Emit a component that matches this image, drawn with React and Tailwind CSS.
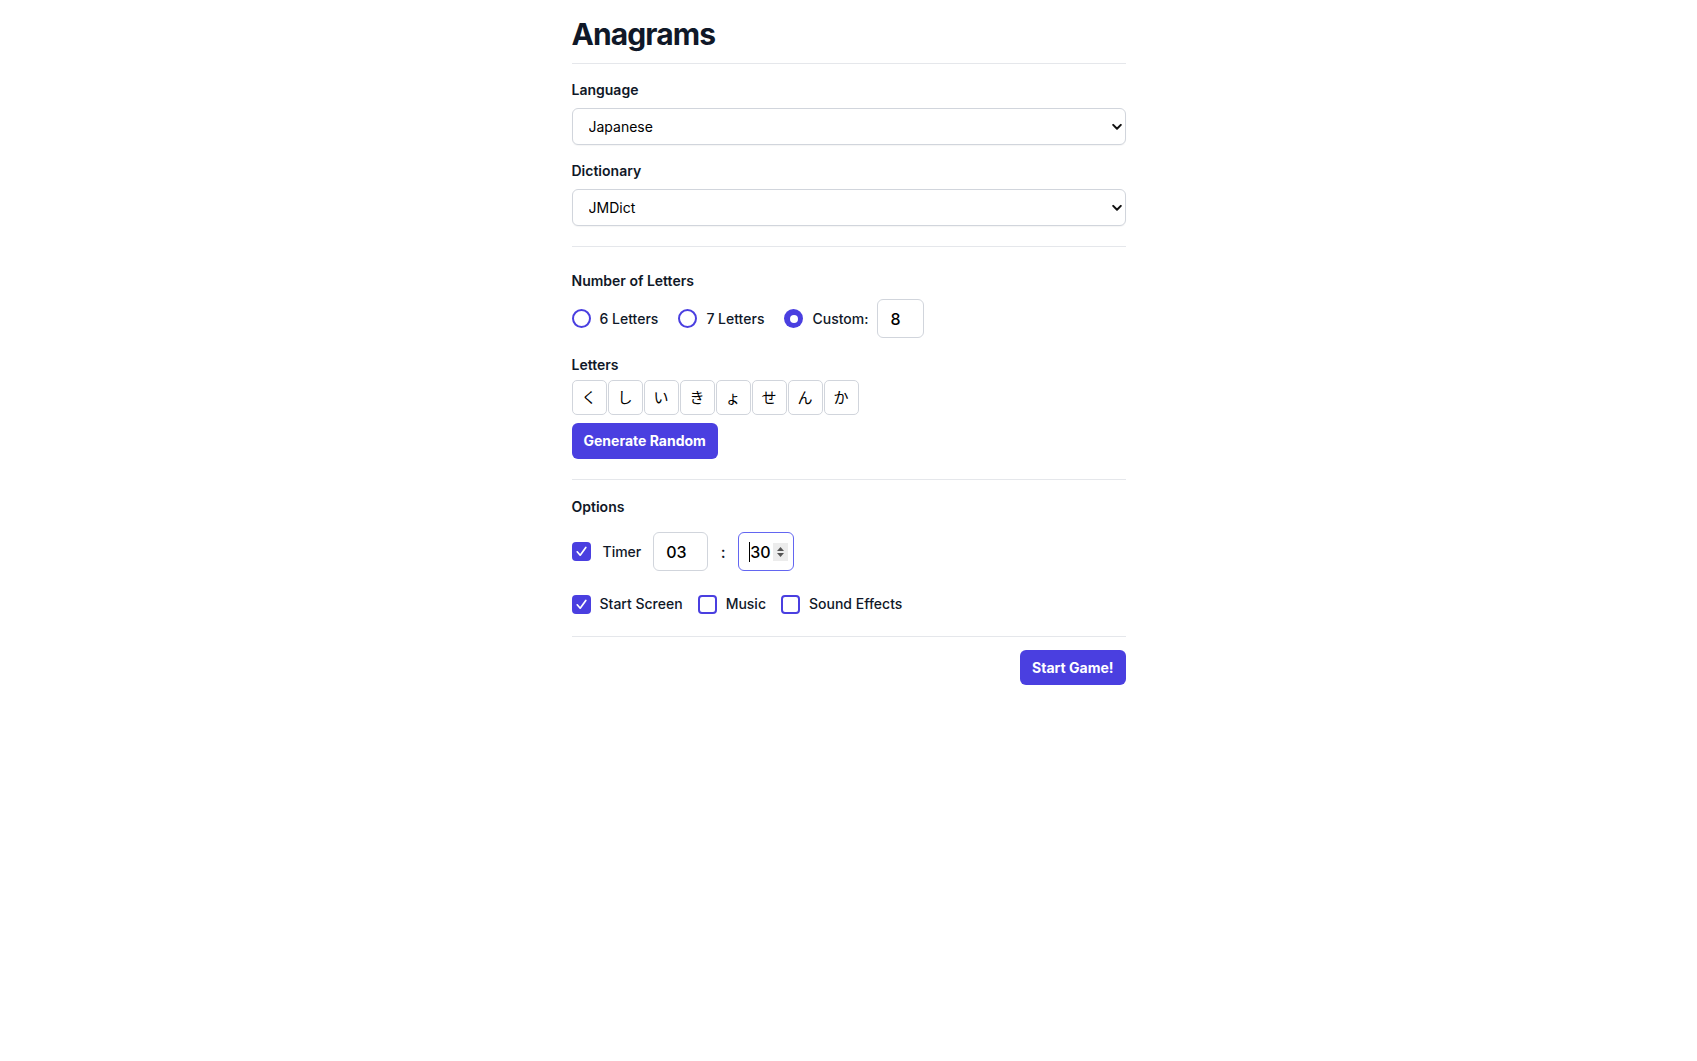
import React, { useState } from "react";

const letters = ["く", "し", "い", "き", "ょ", "せ", "ん", "か"];

// Native-looking select with a small chevron on the right
const SelectBox = ({ value, options }) => (
  <div className="relative">
    <select
      defaultValue={value}
      className="w-full h-[37px] appearance-none rounded-md border border-gray-300 bg-white pl-4 pr-8 text-sm text-black shadow-[0_1px_1px_rgba(0,0,0,0.04)] outline-none"
    >
      {options.map((o) => (
        <option key={o}>{o}</option>
      ))}
    </select>
    <svg
      className="pointer-events-none absolute right-[4px] top-1/2 -translate-y-1/2"
      width="10"
      height="7"
      viewBox="0 0 10 7"
    >
      <path d="M1.2 1.4 L5 5.2 L8.8 1.4" fill="none" stroke="#111" strokeWidth="2" strokeLinecap="round" strokeLinejoin="round" />
    </svg>
  </div>
);

const Radio = ({ checked }) =>
  checked ? (
    <span className="flex h-[19px] w-[19px] items-center justify-center rounded-full bg-[#4a3fe0]">
      <span className="h-[8px] w-[8px] rounded-full bg-white" />
    </span>
  ) : (
    <span className="h-[19px] w-[19px] rounded-full border-2 border-[#4a3fe0] bg-white" />
  );

const Checkbox = ({ checked }) =>
  checked ? (
    <span className="flex h-[19px] w-[19px] items-center justify-center rounded-[4px] bg-[#4a3fe0]">
      <svg width="13" height="13" viewBox="0 0 13 13">
        <path d="M2.2 6.8 L5.2 10.2 L10.8 2.4" fill="none" stroke="white" strokeWidth="1.7" strokeLinecap="round" strokeLinejoin="round" />
      </svg>
    </span>
  ) : (
    <span className="h-[19px] w-[19px] rounded-[4px] border-2 border-[#4a3fe0] bg-white" />
  );

const App = () => {
  const [count, setCount] = useState("custom");
  const [opts, setOpts] = useState({ timer: true, start: true, music: false, sfx: false });

  const toggle = (k) => setOpts({ ...opts, [k]: !opts[k] });

  return (
    <div className="min-h-screen bg-white font-['Inter','Noto_Sans_CJK_JP',sans-serif] text-gray-900">
      <div className="mx-auto w-[554px] pt-4">
        <h1 className="border-b border-gray-200 pb-[11px] text-3xl font-bold tracking-[-0.03em] text-gray-900">
          Anagrams
        </h1>

        {/* Language + dictionary */}
        <div className="border-b border-gray-200 pt-4 pb-5">
          <div className="mb-2 text-sm font-semibold">Language</div>
          <SelectBox value="Japanese" options={["English", "Japanese"]} />
          <div className="mt-4 mb-2 text-sm font-semibold">Dictionary</div>
          <SelectBox value="JMDict" options={["JMDict"]} />
        </div>

        {/* Letters */}
        <div className="border-b border-gray-200 pt-6 pb-5">
          <div className="mb-2 text-sm font-semibold">Number of Letters</div>
          <div className="flex items-center gap-5 text-sm font-medium">
            <label className="flex items-center gap-[9px]" onClick={() => setCount("6")}>
              <Radio checked={count === "6"} />
              <span>6 Letters</span>
            </label>
            <label className="flex items-center gap-[9px]" onClick={() => setCount("7")}>
              <Radio checked={count === "7"} />
              <span>7 Letters</span>
            </label>
            <label className="flex items-center gap-[9px]" onClick={() => setCount("custom")}>
              <Radio checked={count === "custom"} />
              <span>Custom:</span>
              <input
                defaultValue="8"
                className="h-[39px] w-[47px] rounded-md border border-gray-300 px-3 text-base text-black outline-none"
              />
            </label>
          </div>

          <div className="mt-[17px] mb-[5px] text-sm font-semibold">Letters</div>
          <div className="flex gap-px">
            {letters.map((l, i) => (
              <div
                key={i}
                className="flex h-[35px] w-[35px] items-center justify-center rounded-[5px] border border-gray-300 bg-white font-['Noto_Sans_CJK_JP',sans-serif] text-[15px] text-black"
              >
                {l}
              </div>
            ))}
          </div>
          <button className="mt-2 h-9 rounded-md bg-[#4a3fe0] px-3 text-sm font-bold text-white">
            Generate Random
          </button>
        </div>

        {/* Options */}
        <div className="border-b border-gray-200 pt-[17px] pb-[22px]">
          <div className="mb-[15px] text-sm font-semibold">Options</div>
          <div className="flex items-center gap-3 text-sm font-medium">
            <span onClick={() => toggle("timer")}>
              <Checkbox checked={opts.timer} />
            </span>
            <span>Timer</span>
            <input
              defaultValue="03"
              className="h-[39px] w-[55px] rounded-md border border-gray-300 px-3 text-base text-black outline-none"
            />
            <span className="w-[6px] text-center text-base">:</span>
            <div className="flex h-[39px] w-[56px] items-center rounded-md border border-[#6366f1] pl-[10px] text-base text-black">
              <span className="h-[20px] w-px bg-black" />
              <span>30</span>
              <span className="ml-[2px] flex h-[18px] w-[15px] flex-col items-center justify-center gap-[2px] bg-[#ececec]">
                <svg width="7" height="4" viewBox="0 0 7 4">
                  <path d="M0 4 L3.5 0 L7 4 Z" fill="#555" />
                </svg>
                <svg width="7" height="4" viewBox="0 0 7 4">
                  <path d="M0 0 L3.5 4 L7 0 Z" fill="#555" />
                </svg>
              </span>
            </div>
          </div>

          <div className="mt-[23px] flex items-center gap-[15px] text-sm font-medium">
            <label className="flex items-center gap-[9px]" onClick={() => toggle("start")}>
              <Checkbox checked={opts.start} />
              <span>Start Screen</span>
            </label>
            <label className="flex items-center gap-[9px]" onClick={() => toggle("music")}>
              <Checkbox checked={opts.music} />
              <span>Music</span>
            </label>
            <label className="flex items-center gap-[9px]" onClick={() => toggle("sfx")}>
              <Checkbox checked={opts.sfx} />
              <span>Sound Effects</span>
            </label>
          </div>
        </div>

        <div className="flex justify-end pt-[13px]">
          <button className="h-[35px] rounded-md bg-[#4a3fe0] px-3 text-sm font-bold text-white">
            Start Game!
          </button>
        </div>
      </div>
    </div>
  );
};

export default App;
